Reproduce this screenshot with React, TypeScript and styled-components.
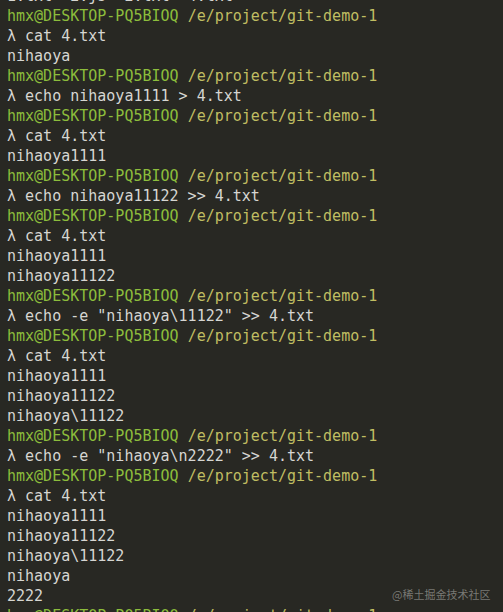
import React from 'react';
import styled, { createGlobalStyle } from 'styled-components';

type Line =
    | { kind: 'prompt' }
    | { kind: 'cmd'; text: string }
    | { kind: 'out'; text: string };

const prompt: Line = { kind: 'prompt' };
const cmd = (text: string): Line => ({ kind: 'cmd', text });
const out = (text: string): Line => ({ kind: 'out', text });

const lines: Line[] = [
    out('1.txt  2.js  2.txt  4.txt'),
    prompt,
    cmd('cat 4.txt'),
    out('nihaoya'),
    prompt,
    cmd('echo nihaoya1111 > 4.txt'),
    prompt,
    cmd('cat 4.txt'),
    out('nihaoya1111'),
    prompt,
    cmd('echo nihaoya11122 >> 4.txt'),
    prompt,
    cmd('cat 4.txt'),
    out('nihaoya1111'),
    out('nihaoya11122'),
    prompt,
    cmd('echo -e "nihaoya\\11122" >> 4.txt'),
    prompt,
    cmd('cat 4.txt'),
    out('nihaoya1111'),
    out('nihaoya11122'),
    out('nihaoya\\11122'),
    prompt,
    cmd('echo -e "nihaoya\\n2222" >> 4.txt'),
    prompt,
    cmd('cat 4.txt'),
    out('nihaoya1111'),
    out('nihaoya11122'),
    out('nihaoya\\11122'),
    out('nihaoya'),
    out('2222'),
    prompt
];

const App: React.FC = () => {
    return (
        <>
            <GlobalStyle />
            <StyledTerminal>
                <StyledLines>
                    {lines.map((line, i) => (
                        <StyledLine key={i}>
                            {line.kind === 'prompt' && (
                                <>
                                    <StyledUser>hmx@DESKTOP-PQ5BIOQ</StyledUser>{' '}
                                    <StyledPath>/e/project/git-demo-1</StyledPath>
                                </>
                            )}
                            {line.kind === 'cmd' && `λ ${line.text}`}
                            {line.kind === 'out' && line.text}
                        </StyledLine>
                    ))}
                </StyledLines>
                <StyledWatermark>@稀土掘金技术社区</StyledWatermark>
            </StyledTerminal>
        </>
    );
};

const GlobalStyle = createGlobalStyle`
    html, body {
        margin: 0;
        padding: 0;
        background: #282823;
        overflow: hidden;
    }
`;

const StyledTerminal = styled.div`
    position: relative;
    width: 503px;
    height: 612px;
    overflow: hidden;
    background: #282823;
    color: #d6d6d2;
    font-family: 'DejaVu Sans Mono', 'Liberation Mono', monospace;
    font-size: 15px;
`;

const StyledLines = styled.div`
    display: flex;
    flex-direction: column;
    margin-top: -14px;
    padding-left: 7px;
`;

const StyledLine = styled.div`
    height: 20px;
    line-height: 20px;
    white-space: pre;
`;

const StyledUser = styled.span`
    color: #8cbd3c;
`;

const StyledPath = styled.span`
    color: #c0be62;
`;

const StyledWatermark = styled.div`
    position: absolute;
    left: 392px;
    top: 586px;
    font-family: 'Noto Sans CJK SC', sans-serif;
    font-size: 11px;
    color: rgba(190, 190, 185, 0.55);
`;

export default App;
